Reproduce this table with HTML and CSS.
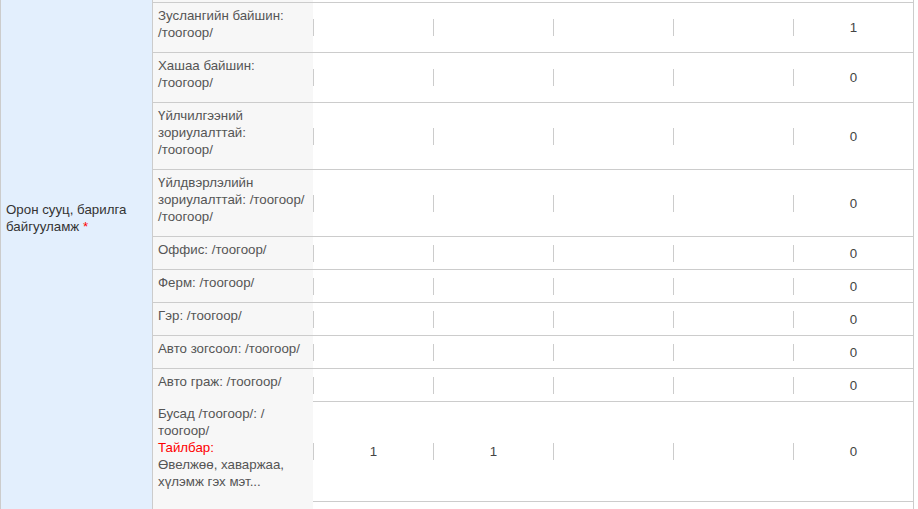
FILE: index.html
```html
<!DOCTYPE html>
<html lang="mn">
<head>
<meta charset="utf-8">
<title>Орон сууц, барилга байгууламж</title>
<link rel="stylesheet" href="styles.css">
</head>
<body>
<div class="sheet">
  <div class="group">Орон сууц, барилга<br>байгууламж <span class="req">*</span></div>

  <div class="lbl lbl--stub"></div>
  <div class="cell cell--stub"></div><div class="cell cell--stub"></div><div class="cell cell--stub"></div><div class="cell cell--stub"></div><div class="cell cell--stub"></div>

  <div class="lbl">Зуслангийн байшин:<br>/тоогоор/</div>
  <div class="cell"><div class="val"></div></div><div class="cell"><div class="val"></div></div><div class="cell"><div class="val"></div></div><div class="cell"><div class="val"></div></div><div class="cell"><div class="val">1</div></div>

  <div class="lbl">Хашаа байшин:<br>/тоогоор/</div>
  <div class="cell"><div class="val"></div></div><div class="cell"><div class="val"></div></div><div class="cell"><div class="val"></div></div><div class="cell"><div class="val"></div></div><div class="cell"><div class="val">0</div></div>

  <div class="lbl">Үйлчилгээний<br>зориулалттай:<br>/тоогоор/</div>
  <div class="cell"><div class="val"></div></div><div class="cell"><div class="val"></div></div><div class="cell"><div class="val"></div></div><div class="cell"><div class="val"></div></div><div class="cell"><div class="val">0</div></div>

  <div class="lbl">Үйлдвэрлэлийн<br>зориулалттай: /тоогоор/<br>/тоогоор/</div>
  <div class="cell"><div class="val"></div></div><div class="cell"><div class="val"></div></div><div class="cell"><div class="val"></div></div><div class="cell"><div class="val"></div></div><div class="cell"><div class="val">0</div></div>

  <div class="lbl">Оффис: /тоогоор/</div>
  <div class="cell"><div class="val"></div></div><div class="cell"><div class="val"></div></div><div class="cell"><div class="val"></div></div><div class="cell"><div class="val"></div></div><div class="cell"><div class="val">0</div></div>

  <div class="lbl">Ферм: /тоогоор/</div>
  <div class="cell"><div class="val"></div></div><div class="cell"><div class="val"></div></div><div class="cell"><div class="val"></div></div><div class="cell"><div class="val"></div></div><div class="cell"><div class="val">0</div></div>

  <div class="lbl">Гэр: /тоогоор/</div>
  <div class="cell"><div class="val"></div></div><div class="cell"><div class="val"></div></div><div class="cell"><div class="val"></div></div><div class="cell"><div class="val"></div></div><div class="cell"><div class="val">0</div></div>

  <div class="lbl">Авто зогсоол: /тоогоор/</div>
  <div class="cell"><div class="val"></div></div><div class="cell"><div class="val"></div></div><div class="cell"><div class="val"></div></div><div class="cell"><div class="val"></div></div><div class="cell"><div class="val">0</div></div>

  <div class="lbl">Авто граж: /тоогоор/</div>
  <div class="cell"><div class="val"></div></div><div class="cell"><div class="val"></div></div><div class="cell"><div class="val"></div></div><div class="cell"><div class="val"></div></div><div class="cell"><div class="val">0</div></div>

  <div class="lbl lbl--open">Бусад /тоогоор/: /<br>тоогоор/<br><span class="note">Тайлбар:</span><br>Өвелжөө, хаваржаа,<br>хүлэмж гэх мэт...</div>
  <div class="cell"><div class="val">1</div></div><div class="cell"><div class="val">1</div></div><div class="cell"><div class="val"></div></div><div class="cell"><div class="val"></div></div><div class="cell"><div class="val">0</div></div>

  <div class="lbl lbl--end"></div>
  <div class="cell cell--end"></div><div class="cell cell--end"></div><div class="cell cell--end"></div><div class="cell cell--end"></div><div class="cell cell--end"></div>
</div>
</body>
</html>
```
FILE: styles.css
```css
html, body {
  margin: 0;
  padding: 0;
  background: #fff;
  overflow: hidden;
}

body {
  font-family: "Liberation Sans", Arial, sans-serif;
  font-size: 13.3px;
  line-height: 17px;
  color: #555;
}

.sheet {
  display: grid;
  grid-template-columns: 152px 160px repeat(5, 120px);
  width: 912px;
  border-left: 1px solid #ccc;
  border-right: 1px solid #ccc;
}

.group {
  grid-column: 1;
  grid-row: 1 / span 12;
  background: #e3effd;
  border-right: 1px solid #ccc;
  padding: 201px 5px 0 5px;
  color: #333;
  white-space: nowrap;
}

.req {
  color: #f00;
}

.lbl {
  background: #f7f7f7;
  border-top: 1px solid #ccc;
  padding: 4px 5px 11px 5px;
  white-space: nowrap;
}

.lbl--open {
  border-top: 0;
}

.lbl--stub {
  border-top: 0;
  padding: 0;
  height: 2px;
}

.lbl--end {
  border-top: 0;
  padding: 0;
  height: 20px;
}

.note {
  color: #f00;
}

.cell {
  border-top: 1px solid #ccc;
  display: flex;
  align-items: center;
  background: #fff;
}

.cell--stub {
  border-top: 0;
  height: 2px;
}

.cell--end {
  height: 20px;
}

.val {
  flex: 1;
  height: 17px;
  line-height: 17px;
  border-left: 1px solid #ccc;
  text-align: center;
  color: #444;
}
```
